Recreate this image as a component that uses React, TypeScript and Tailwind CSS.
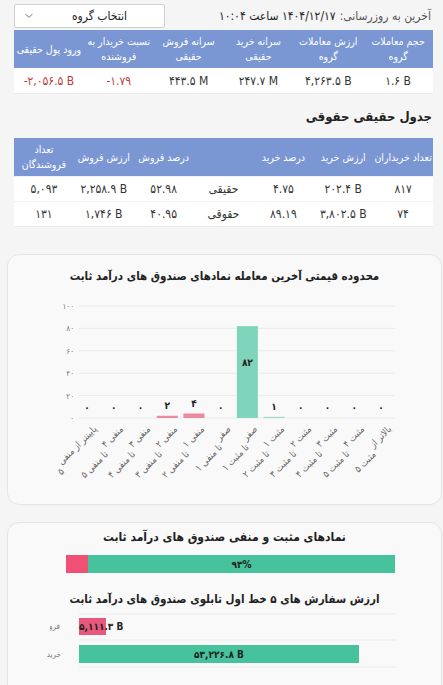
import { ChevronDown } from "lucide-react";

const DIGITS = "۰۱۲۳۴۵۶۷۸۹";
const fa = (s: string) => s.replace(/[0-9]/g, (d) => DIGITS[Number(d)]);

const groupHeads = [
  ["حجم معاملات", "گروه"],
  ["ارزش معاملات", "گروه"],
  ["سرانه خرید", "حقیقی"],
  ["سرانه فروش", "حقیقی"],
  ["نسبت خریدار به", "فروشنده"],
  ["ورود پول حقیقی"],
];

const groupRow = [
  { v: "1.6 B" },
  { v: "4,263.5 B" },
  { v: "247.7 M" },
  { v: "443.5 M" },
  { v: "-1.79", red: true },
  { v: "-2,056.5 B", red: true },
];

const realHeads = [
  ["تعداد خریداران"],
  ["ارزش خرید"],
  ["درصد خرید"],
  [""],
  ["درصد فروش"],
  ["ارزش فروش"],
  ["تعداد", "فروشندگان"],
];

const realRows = [
  ["817", "202.4 B", "4.75", "حقیقی", "52.98", "2,258.9 B", "5,093"],
  ["74", "3,802.5 B", "89.19", "حقوقی", "40.95", "1,746 B", "131"],
];

const ranges: [string, string, number][] = [
  ["پایینتر از منفی", "۵", 0],
  ["منفی ۴", "تا منفی ۵", 0],
  ["منفی ۳", "تا منفی ۴", 0],
  ["منفی ۲", "تا منفی ۳", 2],
  ["منفی ۱", "تا منفی ۲", 4],
  ["صفر", "تا منفی ۱", 0],
  ["صفر", "تا مثبت ۱", 82],
  ["مثبت ۱", "تا مثبت ۲", 1],
  ["مثبت ۲", "تا مثبت ۳", 0],
  ["مثبت ۳", "تا مثبت ۴", 0],
  ["مثبت ۴", "تا مثبت ۵", 0],
  ["بالاتر از", "مثبت ۵", 0],
];

function HeadCell({ lines }: { lines: string[] }) {
  return (
    <div className="flex flex-col items-center justify-center text-center whitespace-nowrap">
      {lines.map((l, i) => (
        <span key={i}>{l}</span>
      ))}
    </div>
  );
}

function RangeChart() {
  const zeroY = 132;
  const k = 1.12;
  const step = 26.73;
  return (
    <div className="relative h-[218px]">
      <svg width="432" height="218" direction="ltr" className="absolute left-0 top-0">
        {[0, 20, 40, 60, 80, 100].map((v) => {
          const y = zeroY - v * k;
          return (
            <g key={v}>
              <line x1="70" x2="387" y1={y} y2={y} stroke="#ebebeb" strokeWidth="1" />
              <text x="66" y={y + 3} textAnchor="end" fontSize="8" fill="#777">
                {fa(String(v))}
              </text>
            </g>
          );
        })}
        {ranges.map(([, , v], i) => {
          const cx = 79 + step * i;
          const h = Math.max(v * k, v > 0 ? 1.2 : 0);
          const fill = i < 6 ? "#e98aa0" : v === 1 ? "#9fd9c6" : "#7fd5bb";
          const ly = v === 82 ? 80 : zeroY - h - 7;
          return (
            <g key={i}>
              {v > 0 && <rect x={cx - 10.5} y={zeroY - h} width="21" height={h} fill={fill} />}
              <text x={cx} y={ly} textAnchor="middle" fontSize="10" fontWeight="700" fill="#222">
                {fa(String(v))}
              </text>
            </g>
          );
        })}
      </svg>
      {ranges.map(([a, b], i) => (
        <div
          key={i}
          dir="rtl"
          className="absolute whitespace-nowrap text-[9.5px] leading-[10px] text-[#666] origin-top-right -rotate-45"
          style={{ right: 432 - (79 + 26.73 * i + 4), top: 138 }}
        >
          <span>{a}</span> <span className="relative top-[7px]">{b}</span>
        </div>
      ))}
    </div>
  );
}

function OrderChart() {
  return (
    <svg width="432" height="90" direction="ltr" className="block">
      {[5, 31, 58].map((y) => (
        <line key={y} x1="70" x2="387" y1={y} y2={y} stroke="#ebebeb" strokeWidth="1" />
      ))}
      <defs>
        <clipPath id="sellClip">
          <rect x="41" y="0" width="12" height="30" />
        </clipPath>
      </defs>
      <text x="51" y="20" textAnchor="end" fontSize="8" fill="#777" clipPath="url(#sellClip)">
        فروش
      </text>
      <text x="52" y="48" textAnchor="end" fontSize="8" fill="#777">
        خرید
      </text>
      <rect x="70" y="9" width="27" height="17" fill="#e8587b" />
      <text x="70" y="21" fontSize="10" fontWeight="700" fill="#222">
        {fa("5,111.3 B")}
      </text>
      <rect x="70" y="36" width="280" height="18" fill="#46c39c" />
      <text x="210" y="49" textAnchor="middle" fontSize="10" fontWeight="700" fill="#222">
        {fa("53,226.8 B")}
      </text>
    </svg>
  );
}

export default function App() {
  return (
    <div dir="rtl" className="min-h-screen bg-[#f5f5f5] font-['DejaVu_Sans_Condensed','DejaVu_Sans',sans-serif] pb-10">
      <div className="ml-[14px] mr-[12px] pt-[4px] h-[28px] flex items-center justify-between">
        <div className="flex items-baseline gap-1 whitespace-nowrap">
          <span className="text-[12px] text-[#555]">آخرین به روزرسانی:</span>
          <span className="text-[12px] text-[#222]">{fa("1404/12/17")} ساعت {fa("10:04")}</span>
        </div>
        <div className="w-[151px] h-[24px] bg-white border border-[#cfcfcf] rounded-[2px] flex items-center">
          <span className="flex-1 text-center text-[12px] text-[#222]">انتخاب گروه</span>
          <ChevronDown className="w-3 h-3 text-[#444] ml-[8px]" strokeWidth={1.5} />
        </div>
      </div>

      <div className="ml-[14px] mr-[10px] mt-[2px] bg-white border-b border-[#ececec]">
        <div className="grid grid-cols-6 h-[38px] bg-[#7b97d3] text-white text-[10.5px] leading-[15px]">
          {groupHeads.map((h, i) => (
            <HeadCell key={i} lines={h} />
          ))}
        </div>
        <div className="grid grid-cols-6 h-[25px] items-center text-[12px] text-[#333]">
          {groupRow.map((c, i) => (
            <div key={i} dir="ltr" className={`text-center ${c.red ? "text-[#c23b3b]" : ""}`}>
              {fa(c.v)}
            </div>
          ))}
        </div>
      </div>

      <h2 className="mr-[11px] mt-[11px] h-[24px] leading-[24px] text-[13px] font-bold text-[#222]">جدول حقیقی حقوقی</h2>

      <div className="ml-[14px] mr-[10px] mt-[9px] bg-white border-b border-[#ececec]">
        <div className="grid grid-cols-7 h-[38px] bg-[#7b97d3] text-white text-[10.5px] leading-[15px]">
          {realHeads.map((h, i) => (
            <HeadCell key={i} lines={h} />
          ))}
        </div>
        {realRows.map((r, ri) => (
          <div key={ri} className="grid grid-cols-7 h-[25px] items-center text-[12px] text-[#333] border-t border-[#f1f1f1] first:border-t-0">
            {r.map((c, i) => (
              <div key={i} dir={i === 3 ? "rtl" : "ltr"} className="text-center whitespace-nowrap">
                {fa(c)}
              </div>
            ))}
          </div>
        ))}
      </div>

      <section className="ml-[7px] mr-[1px] mt-[27px] bg-[#f9f9f9] border border-[#e4e4e4] rounded-[12px]">
        <h3 className="pt-[11px] h-[31px] leading-[20px] text-center text-[11.5px] font-bold text-[#222]">
          محدوده قیمتی آخرین معامله نمادهای صندوق های درآمد ثابت
        </h3>
        <RangeChart />
      </section>

      <section className="ml-[7px] mr-[1px] mt-[17px] bg-[#f9f9f9] border border-[#e4e4e4] rounded-[12px] pb-3">
        <h3 className="pt-[4px] h-[24px] leading-[20px] text-center text-[12px] font-bold text-[#222]">
          نمادهای مثبت و منفی صندوق های درآمد ثابت
        </h3>
        <div dir="ltr" className="mt-[8px] mr-[46px] ml-auto w-[329px] h-[18px] flex">
          <div className="w-[22px] bg-[#ef5073]" />
          <div className="flex-1 bg-[#46c39c] flex items-center justify-center text-[10px] font-bold text-[#222]">
            {fa("93")}%
          </div>
        </div>
        <h3 className="mt-[16px] h-[20px] leading-[20px] text-center text-[11.5px] font-bold text-[#222]">
          ارزش سفارش های ۵ خط اول تابلوی صندوق های درآمد ثابت
        </h3>
        <OrderChart />
      </section>
    </div>
  );
}
